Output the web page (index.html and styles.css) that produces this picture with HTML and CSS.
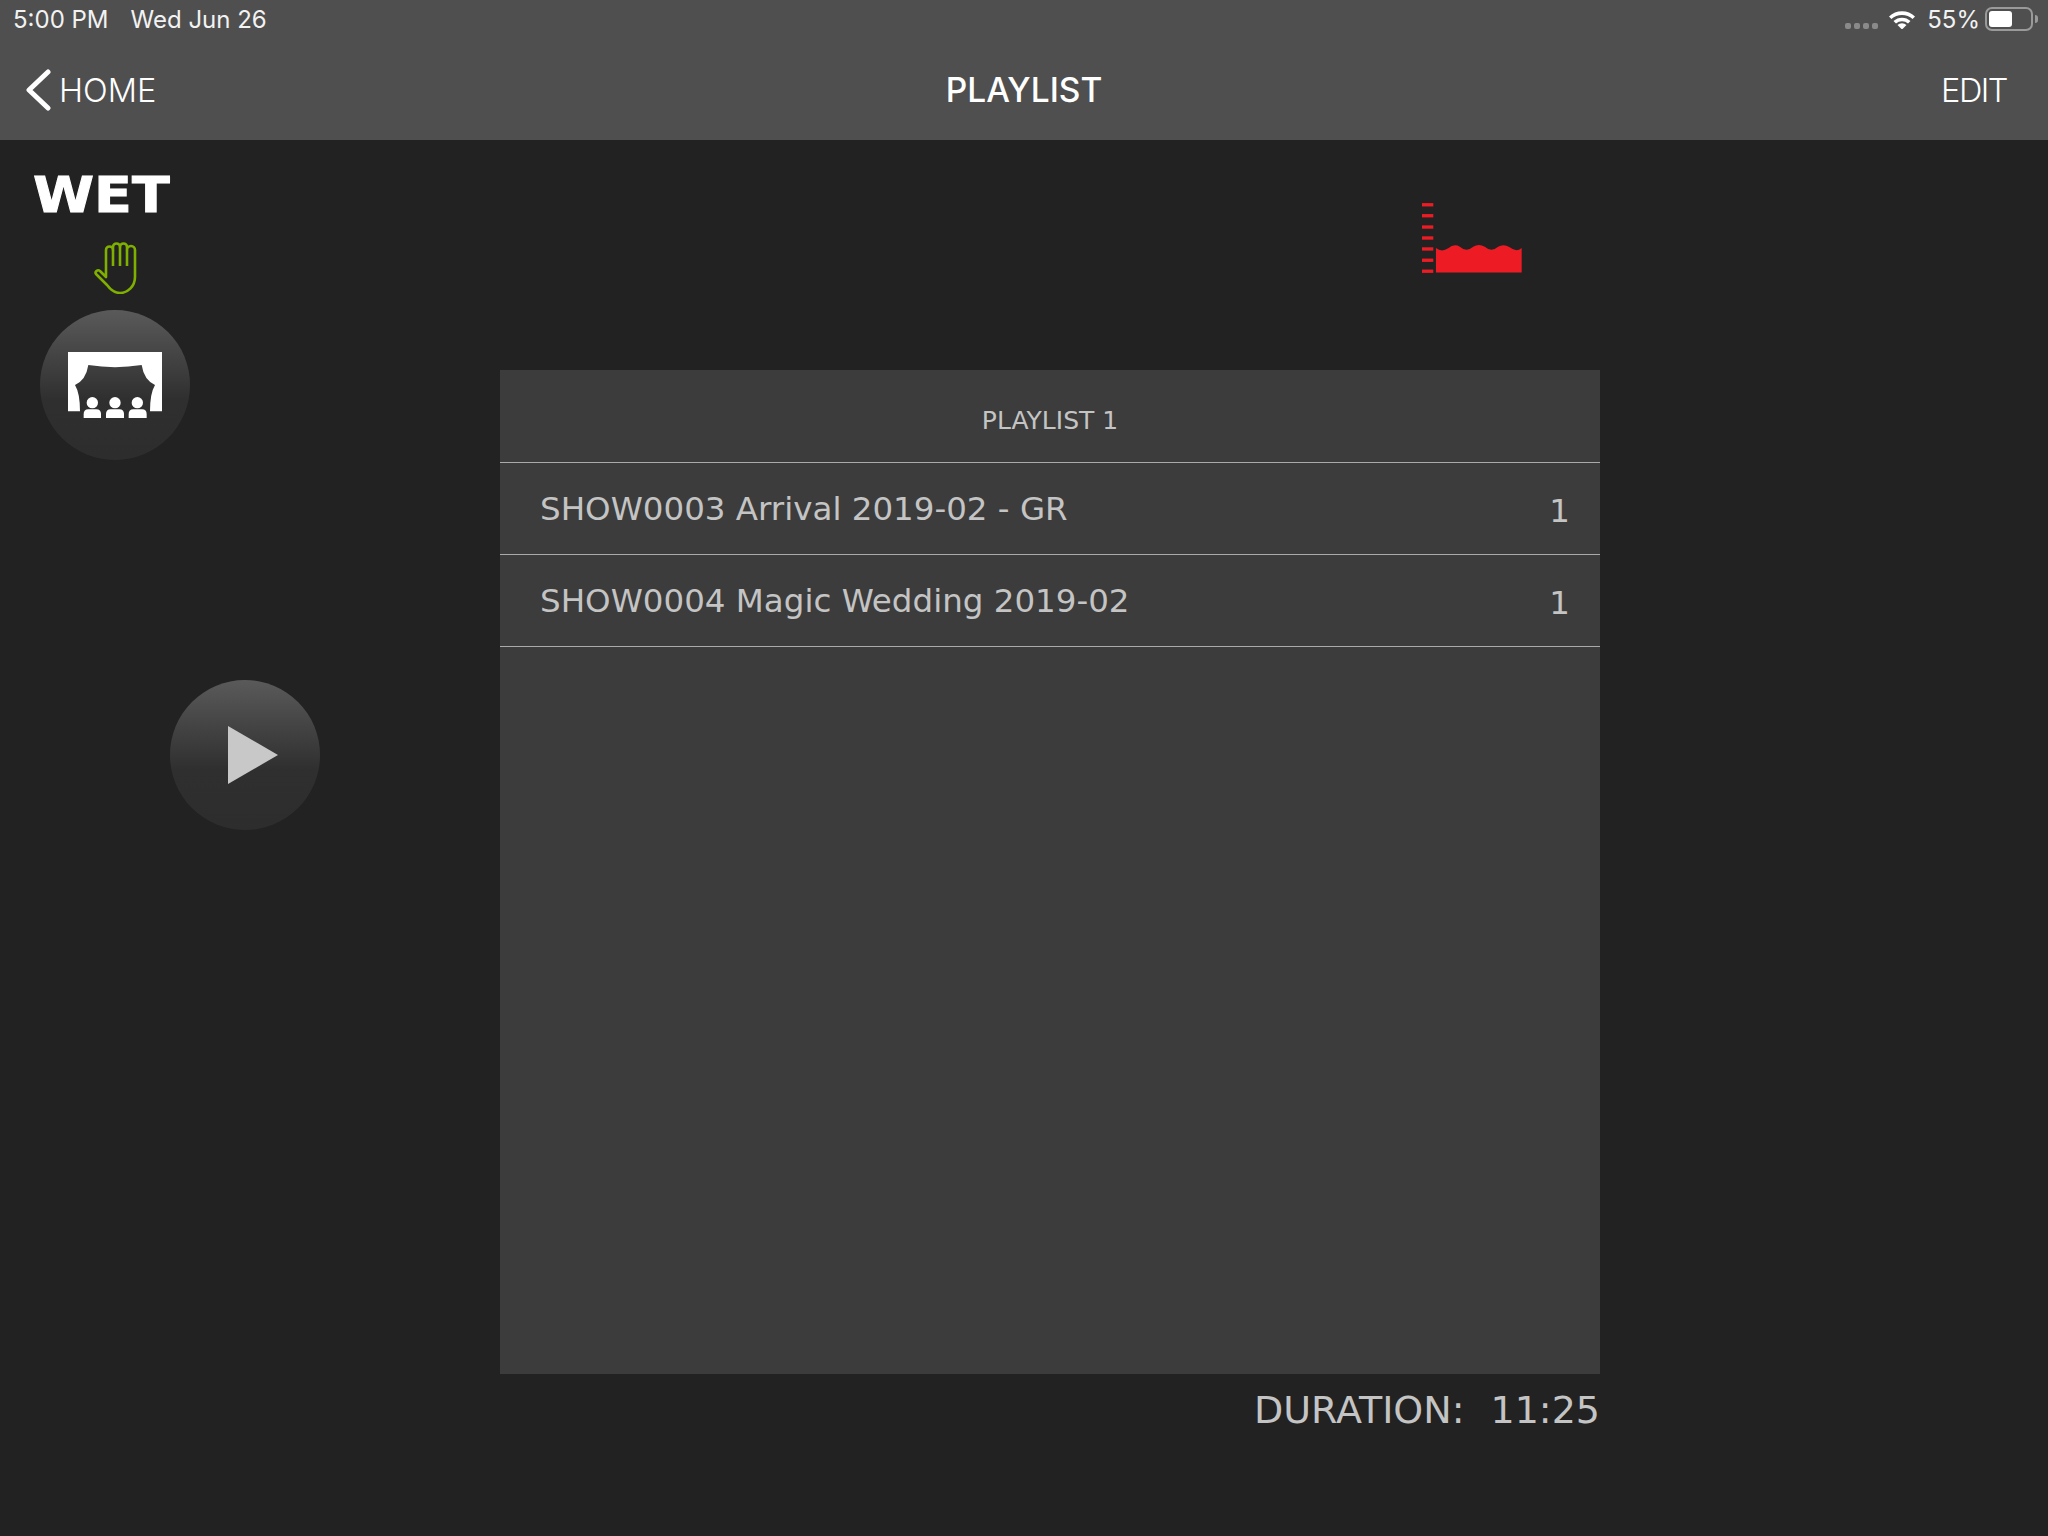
FILE: index.html
```html
<!DOCTYPE html>
<html>
<head>
  <title>Playlist</title>
  <meta charset="UTF-8">
  <meta name="viewport" content="width=device-width, initial-scale=1">
  <link rel="stylesheet" href="styles.css">
</head>
<body>
  <header class="topbar">
    <div class="status">
      <span class="status-time">5:00 PM</span>
      <span class="status-date">Wed Jun 26</span>
      <span class="status-right">
        <span class="signal"><i></i><i></i><i></i><i></i></span>
        <svg class="wifi" viewBox="0 0 28 20">
          <path d="M1 7.500a19 19 0 0 1 26 0l-2.400 2.600a15.500 15.500 0 0 0-21.200 0z" fill="#fff"/>
          <path d="M5.500 12a12.500 12.500 0 0 1 17 0l-2.500 2.600a9 9 0 0 0-12 0z" fill="#fff"/>
          <path d="M9.500 16a6.500 6.500 0 0 1 9 0L14 20.500z" fill="#fff"/>
        </svg>
        <span class="battery-text">55%</span>
        <span class="battery"><span class="battery-fill"></span></span>
        <span class="battery-nub"></span>
      </span>
    </div>
    <nav class="nav">
      <a class="nav-back">
        <svg class="chevron" viewBox="0 0 26 42">
          <path d="M23 3L4 21l19 18" fill="none" stroke="#fff" stroke-width="5" stroke-linecap="round" stroke-linejoin="round"/>
        </svg>
        HOME
      </a>
      <span class="nav-title">PLAYLIST</span>
      <a class="nav-edit">EDIT</a>
    </nav>
  </header>

  <main class="main">
    <aside class="side">
      <div class="wet">WET</div>
      <svg class="hand" viewBox="0 0 44 52">
        <path d="M12 35V8a3.500 3.500 0 0 1 7 0V5a3.500 3.500 0 0 1 7 0V5a3.500 3.500 0 0 1 7 0V8a4 4 0 0 1 8 0V35c0 9-7 16-15 16-6 0-10-4-13-8L2 32c-1.500-2 1.500-5 4-3z" fill="none" stroke="#7fb000" stroke-width="2.600" stroke-linejoin="round"/>
        <path d="M19 8V24M26 5V24M33 8V24" fill="none" stroke="#7fb000" stroke-width="2.600"/>
      </svg>
      <button class="round-btn stage-btn">
        <svg class="stage" viewBox="60 450 450 450">
          <path fill="#fff" fill-rule="evenodd" d="M144 576H426V754H144zM205 615Q285 628 365 615Q372 660 405 675Q390 700 390 754H180Q180 700 165 675Q198 660 205 615z"/>
          <circle cx="217" cy="728" r="17" fill="#fff"/>
          <circle cx="285" cy="728" r="17" fill="#fff"/>
          <circle cx="352" cy="728" r="17" fill="#fff"/>
          <path fill="#fff" d="M191 774v-12q0-14 14-14h24q14 0 14 14v12z"/>
          <path fill="#fff" d="M258 774v-12q0-14 14-14h26q14 0 14 14v12z"/>
          <path fill="#fff" d="M326 774v-12q0-14 14-14h26q14 0 14 14v12z"/>
        </svg>
      </button>
      <button class="round-btn play-btn">
        <span class="play-icon"></span>
      </button>
    </aside>

    <section class="content">
      <div class="level-row">
        <svg class="level" viewBox="60 30 310 225">
          <g fill="#ed1c24">
            <rect x="66" y="39" width="34" height="10"/>
            <rect x="66" y="72" width="34" height="10"/>
            <rect x="66" y="106" width="34" height="10"/>
            <rect x="66" y="139" width="34" height="10"/>
            <rect x="66" y="172" width="34" height="10"/>
            <rect x="66" y="206" width="34" height="10"/>
            <rect x="66" y="239" width="34" height="10"/>
            <path d="M108 174Q125 188 145 175Q162 160 180 170Q200 188 220 170Q237 160 255 170Q275 188 295 170Q312 160 330 172Q350 188 366 174V248H108z"/>
          </g>
        </svg>
      </div>
      <div class="panel">
        <div class="panel-head">PLAYLIST 1</div>
        <div class="show-row">
          <span>SHOW0003 Arrival 2019-02 - GR</span>
          <span class="show-count">1</span>
        </div>
        <div class="show-row">
          <span>SHOW0004 Magic Wedding 2019-02</span>
          <span class="show-count">1</span>
        </div>
      </div>
      <div class="duration">
        <span>DURATION:</span>
        <span>11:25</span>
      </div>
    </section>
  </main>
</body>
</html>
```

FILE: styles.css
```css
html, body {
  margin: 0;
  height: 100%;
}
body {
  background: #222222;
  font-family: "DejaVu Sans", sans-serif;
  overflow: hidden;
}
.topbar {
  height: 140px;
  background: #4f4f4f;
  color: #fff;
  font-family: Inter, sans-serif;
}
.status {
  height: 38px;
  display: flex;
  align-items: center;
  padding-left: 13px;
  font-size: 24px;
  color: #f2f2f2;
}
.status-date {
  margin-left: 22px;
}
.status-right {
  margin-left: auto;
  display: flex;
  align-items: center;
}
.signal {
  display: flex;
  gap: 3px;
  margin-top: 14px;
  margin-right: 10px;
}
.signal i {
  width: 6px;
  height: 6px;
  border-radius: 2px;
  background: #8a8a8a;
}
.wifi {
  width: 28px;
  height: 20px;
  margin-right: 11px;
}
.battery-text {
  margin-right: 5px;
}
.battery {
  box-sizing: border-box;
  width: 48px;
  height: 24px;
  padding: 2px;
  border: 2px solid #9a9a9a;
  border-radius: 7px;
}
.battery-fill {
  display: block;
  width: 23px;
  height: 16px;
  background: #fff;
  border-radius: 3px;
}
.battery-nub {
  width: 3px;
  height: 8px;
  margin-left: 2px;
  margin-right: 10px;
  background: #9a9a9a;
  border-radius: 0 3px 3px 0;
}
.nav {
  height: 102px;
  box-sizing: border-box;
  display: grid;
  grid-template-columns: 1fr auto 1fr;
  align-items: center;
  font-size: 32.5px;
  font-weight: 300;
  padding: 2px 25px 0;
}
.nav-back {
  display: flex;
  align-items: center;
  gap: 8px;
}
.chevron {
  width: 26px;
  height: 42px;
}
.nav-title {
  font-size: 33.5px;
  font-weight: 500;
}
.nav-edit {
  justify-self: end;
  margin-right: 16px;
  letter-spacing: -1.500px;
}
.main {
  display: flex;
}
.side {
  width: 500px;
  flex: none;
  display: flex;
  flex-direction: column;
  align-items: flex-start;
}
.wet {
  margin: 26px 0 0 33px;
  font-size: 49px;
  font-weight: bold;
  line-height: 60px;
  color: #fff;
  transform: scaleX(1.13);
  transform-origin: left;
  -webkit-text-stroke: 1px #fff;
}
.hand {
  width: 44px;
  height: 52px;
  margin: 16px 0 0 94px;
}
.round-btn {
  width: 150px;
  height: 150px;
  padding: 0;
  border: 0;
  border-radius: 50%;
  background: linear-gradient(#5a5a5a 0%, #2f2f2f 60%, #2d2d2d 100%);
  display: flex;
  align-items: center;
  justify-content: center;
}
.stage-btn {
  margin: 16px 0 0 40px;
}
.stage {
  width: 150px;
  height: 150px;
}
.play-btn {
  margin: 220px 0 0 170px;
}
.play-icon {
  width: 0;
  height: 0;
  margin-left: 16px;
  border-left: 50px solid #c8c8c8;
  border-top: 29px solid transparent;
  border-bottom: 29px solid transparent;
}
.content {
  width: 1100px;
  color: #c4c4c4;
}
.level-row {
  height: 230px;
  padding-left: 920px;
  box-sizing: border-box;
}
.level {
  width: 103px;
  height: 75px;
  margin-top: 60px;
}
.panel {
  height: 1004px;
  background: #3c3c3c;
}
.panel-head {
  height: 93px;
  box-sizing: border-box;
  display: flex;
  align-items: center;
  justify-content: center;
  padding-top: 9px;
  border-bottom: 1px solid #aaaaaa;
  font-size: 25px;
}
.show-row {
  height: 92px;
  box-sizing: border-box;
  display: flex;
  align-items: center;
  justify-content: space-between;
  padding: 0 30px 0 40px;
  border-bottom: 1px solid #aaaaaa;
  font-size: 32.5px;
}
.show-count {
  margin-top: 4px;
}
.duration {
  display: flex;
  justify-content: flex-end;
  gap: 26px;
  margin-top: 14px;
  font-size: 38px;
  line-height: 44px;
}
```
